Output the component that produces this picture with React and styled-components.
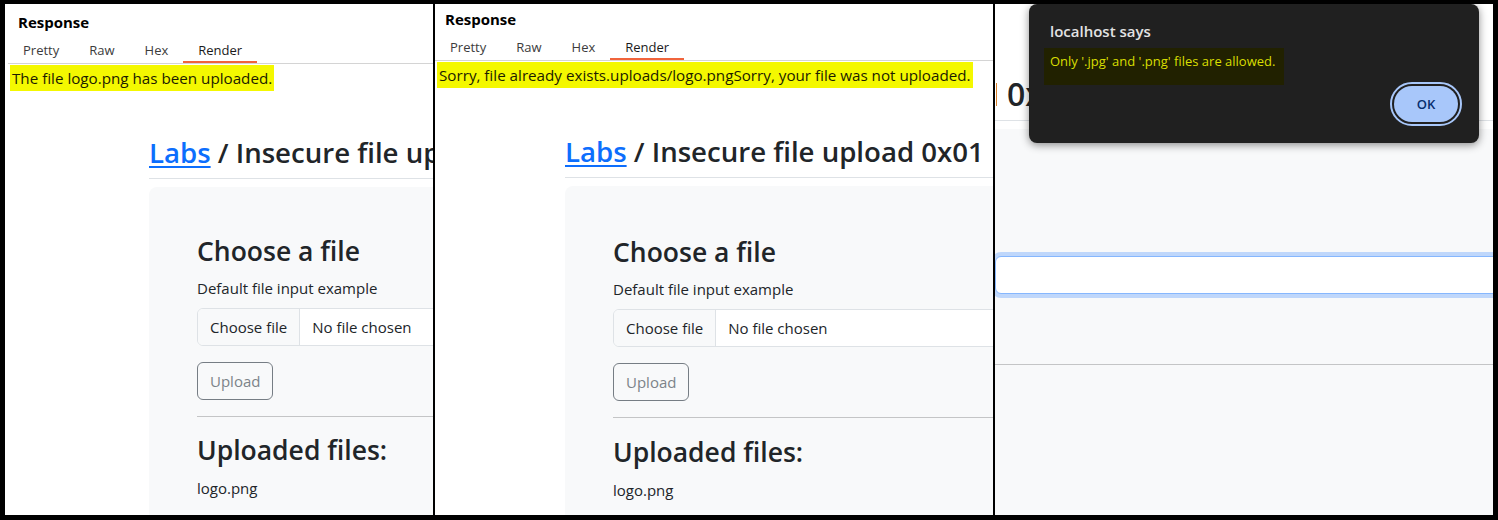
import styled, { createGlobalStyle } from 'styled-components';

const GlobalStyle = createGlobalStyle`
  html, body {
    margin: 0;
    padding: 0;
    background: #000;
  }
  *, *::before, *::after {
    box-sizing: border-box;
  }
`;

const Frame = styled.div`
  display: flex;
  gap: 2px;
  width: 1498px;
  height: 520px;
  padding: 4px 5px 5px;
  background: #000;
  font-family: 'Open Sans', 'Noto Sans', sans-serif;
`;

const Panel = styled.section`
  position: relative;
  flex: 0 0 ${(props) => props.$width}px;
  display: flex;
  flex-direction: column;
  background: #fff;
  overflow: hidden;
`;

const ResponseTitle = styled.div`
  margin: ${(props) => props.$top}px 0 0 ${(props) => props.$left}px;
  font-size: 15px;
  line-height: 20px;
  font-weight: 700;
  color: #000;
`;

const TabBar = styled.div`
  display: flex;
  margin: 9px 0 0 ${(props) => props.$left}px;
  border-bottom: 1px solid #d4d4d4;
`;

const Tab = styled.div`
  padding: 0 15px 2px;
  font-size: 13px;
  line-height: 18px;
  color: ${(props) => (props.$active ? '#1a1a1a' : '#3c3c3c')};
  border-bottom: 2px solid ${(props) => (props.$active ? '#f0643c' : 'transparent')};
`;

const RenderView = styled.div`
  flex: 1;
  display: flex;
  flex-direction: column;
  margin-left: ${(props) => props.$inset}px;
  overflow: hidden;
`;

const Highlight = styled.div`
  width: max-content;
  margin: 1px 0 0 2px;
  padding: 0 2px;
  background: #f4f800;
  color: #1c1c00;
  font-size: 15.2px;
  line-height: 26px;
  white-space: nowrap;
`;

const Page = styled.div`
  flex: 1;
  display: flex;
  flex-direction: column;
  width: 1000px;
  margin: ${(props) => props.$top}px 0 0 ${(props) => props.$left}px;
  color: #212529;
`;

const Heading = styled.h2`
  margin: 0 0 8px;
  padding: 0 0 ${(props) => props.$pad}px;
  border-bottom: 1px solid #dee2e6;
  font-size: ${(props) => props.$size}px;
  line-height: 1.2;
  font-weight: 600;
  white-space: nowrap;

  a {
    color: #0d6efd;
    text-decoration: underline;
    text-decoration-thickness: 2px;
    text-underline-offset: 3px;
  }
`;

const EdgeGlint = styled.span`
  display: inline-block;
  width: 1px;
  height: 23px;
  margin: 0 10px 0 1px;
  background: #d9822b;
`;

const Card = styled.div`
  padding: ${(props) => props.$padTop}px 48px 48px;
  background: #f8f9fa;
  border-radius: 8px;
`;

const WideCard = styled.div`
  flex: 1;
  margin-right: -20px;
  padding-top: ${(props) => props.$padTop}px;
  background: #f8f9fa;
`;

const CardTitle = styled.h3`
  margin: 0 0 ${(props) => props.$gap}px;
  font-size: 26.5px;
  line-height: 1.2;
  font-weight: 600;
`;

const Label = styled.div`
  margin-bottom: 8px;
  font-size: 15px;
  line-height: 24px;
`;

const FileInput = styled.div`
  display: flex;
  height: 38px;
  background: #fff;
  border: 1px solid ${(props) => (props.$focused ? '#86b7fe' : '#dee2e6')};
  border-radius: 6px;
  box-shadow: ${(props) => (props.$focused ? '0 0 0 4px #bfd7fb' : 'none')};
  font-size: 15px;
  overflow: hidden;
`;

const FileButton = styled.span`
  display: flex;
  align-items: center;
  padding: 0 12px;
  background: #f8f9fa;
  border-right: 1px solid #dee2e6;
`;

const FileName = styled.span`
  display: flex;
  align-items: center;
  padding: 0 12px;
`;

const UploadButton = styled.button`
  display: block;
  margin-top: 16px;
  height: 38px;
  padding: 0 12px;
  border: 1px solid #767d84;
  border-radius: 6px;
  background: transparent;
  color: #7c8389;
  font-family: inherit;
  font-size: 15px;
`;

const Divider = styled.hr`
  margin: ${(props) => props.$above ?? 16}px 0 ${(props) => props.$below ?? 16}px;
  border: 0;
  border-top: 1px solid #c4c5c6;
`;

const FileList = styled.div`
  font-size: 15px;
  line-height: 24px;
`;

const Dialog = styled.div`
  position: absolute;
  top: 0;
  left: 34px;
  width: 450px;
  display: flex;
  flex-direction: column;
  padding: 17px 21px 21px 15px;
  background: #202020;
  border-radius: 8px;
  box-shadow: 0 2px 8px rgba(0, 0, 0, 0.45);
`;

const DialogTitle = styled.div`
  margin-left: 6px;
  font-size: 15px;
  line-height: 20px;
  font-weight: 600;
  color: #e3e3e3;
`;

const DialogMessage = styled.div`
  align-self: flex-start;
  margin-top: 7px;
  padding: 4px 9px 15px 6px;
  background: #212100;
  color: #d9de00;
  font-size: 13px;
  line-height: 18px;
`;

const DialogFooter = styled.div`
  display: flex;
  justify-content: flex-end;
  margin-top: 1px;
`;

const OkButton = styled.button`
  width: 64px;
  height: 36px;
  border: 0;
  border-radius: 18px;
  background: #a8c7fa;
  color: #062e6f;
  font-family: inherit;
  font-size: 13px;
  font-weight: 600;
  outline: 2px solid #a8c7fa;
  outline-offset: 2px;
`;

function LabPage({ top, left, padTop, sectionGap }) {
  return (
    <Page $top={top} $left={left}>
      <Heading $size={27.6} $pad={9}>
        <a>Labs</a> / Insecure file upload 0x01
      </Heading>
      <Card $padTop={padTop}>
        <CardTitle $gap={8}>Choose a file</CardTitle>
        <Label>Default file input example</Label>
        <FileInput>
          <FileButton>Choose file</FileButton>
          <FileName>No file chosen</FileName>
        </FileInput>
        <UploadButton>Upload</UploadButton>
        <Divider $below={sectionGap} />
        <CardTitle $gap={9}>Uploaded files:</CardTitle>
        <FileList>logo.png</FileList>
      </Card>
    </Page>
  );
}

function ResponsePanel({ width, top, shift, message, pageTop, pageLeft, padTop, sectionGap }) {
  const tabs = ['Pretty', 'Raw', 'Hex', 'Render'];
  return (
    <Panel $width={width}>
      <ResponseTitle $top={top} $left={13 + shift}>
        Response
      </ResponseTitle>
      <TabBar $left={3 + shift}>
        {tabs.map((tab) => (
          <Tab key={tab} $active={tab === 'Render'}>
            {tab}
          </Tab>
        ))}
      </TabBar>
      <RenderView $inset={3 + shift}>
        <Highlight>{message}</Highlight>
        <LabPage top={pageTop} left={pageLeft} padTop={padTop} sectionGap={sectionGap} />
      </RenderView>
    </Panel>
  );
}

function AlertPanel() {
  return (
    <Panel $width={498}>
      <Page $top={71} $left={0}>
        <Heading $size={32} $pad={7}>
          <EdgeGlint />0x01
        </Heading>
        <WideCard $padTop={127}>
          <FileInput $focused />
          <Divider $above={70} />
        </WideCard>
      </Page>
      <Dialog>
        <DialogTitle>localhost says</DialogTitle>
        <DialogMessage>Only '.jpg' and '.png' files are allowed.</DialogMessage>
        <DialogFooter>
          <OkButton>OK</OkButton>
        </DialogFooter>
      </Dialog>
    </Panel>
  );
}

export default function App() {
  return (
    <>
      <GlobalStyle />
      <Frame>
        <ResponsePanel
          width={428}
          top={8}
          shift={0}
          pageTop={45}
          pageLeft={141}
          padTop={49}
          sectionGap={18}
          message="The file logo.png has been uploaded."
        />
        <ResponsePanel
          width={558}
          top={5}
          shift={-3}
          pageTop={47}
          pageLeft={130}
          padTop={51}
          sectionGap={19}
          message="Sorry, file already exists.uploads/logo.pngSorry, your file was not uploaded."
        />
        <AlertPanel />
      </Frame>
    </>
  );
}
